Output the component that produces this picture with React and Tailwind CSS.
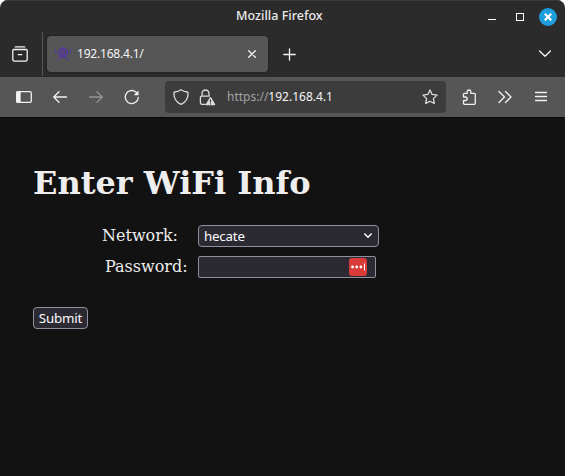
import React from 'react';

const ui = "font-['Noto_Sans','Open_Sans',sans-serif]";

function Icon({ children, className = '', size = 16 }) {
  return (
    <svg
      width={size}
      height={size}
      viewBox="0 0 16 16"
      fill="none"
      stroke="currentColor"
      strokeWidth="1.3"
      strokeLinecap="round"
      strokeLinejoin="round"
      className={`block shrink-0 ${className}`}
    >
      {children}
    </svg>
  );
}

function TitleBar() {
  return (
    <div className="flex h-8 shrink-0 items-center border-t border-[#393939] pr-2">
      <div className="w-[236px]" />
      <div className="w-[92px] pb-px text-[12.5px] leading-5 font-medium tracking-[0.02px] whitespace-nowrap text-[#ececec]">Mozilla Firefox</div>
      <div className="ml-auto flex items-center">
        <div className="mt-[5px] mr-[20px] h-px w-2 bg-white" />
        <div className="mr-[15px] h-2 w-2 border border-white" />
        <div className="flex h-[18px] w-[18px] items-center justify-center rounded-full bg-[#1f9ede] text-white">
          <svg width="8" height="8" viewBox="0 0 8 8" stroke="currentColor" strokeWidth="2.2">
            <path d="M.7.7l6.6 6.6M7.3.7L.7 7.3" />
          </svg>
        </div>
      </div>
    </div>
  );
}

function Favicon() {
  return (
    <svg width="16" height="16" viewBox="0 0 16 16" fill="#543d8d" className="block shrink-0">
      <path d="M5 2h2V1h2v1h2v1h1v1h1v5h-1v2h-1v1H5v-1H4V9H3V4h1V3h1z" />
      <path d="M0 3h1v4h2v1H1V7H0zM15 3h1v4h-1v1h-2V7h2zM4 11h1v2H4v1H2v-1h2zM11 11h1v2h2v1h-3z" />
      <path fill="#555" d="M5 5h1v3H5zM7 5h1v3H7zM10 5h1v3h-1z" opacity=".75" />
    </svg>
  );
}

function TabStrip() {
  return (
    <div className="flex h-[45px] shrink-0 text-[#f4f4f4]">
      <div className="flex h-11 w-[43px] items-center border-r border-[#555] pl-3">
        <Icon>
          <path d="M3.3.9h9.4M1.8 3.5h12.4a1 1 0 0 1 1 1v9a1.7 1.7 0 0 1-1.7 1.7h-11A1.7 1.7 0 0 1 .8 13.500v-9a1 1 0 0 1 1-1zM6.3 8.700h3.400" />
        </Icon>
      </div>
      <div className="mt-1 ml-1 flex h-9 w-[221px] items-center rounded bg-[#565656] pr-3 pl-2 shadow-[0_0_2px_rgba(0,0,0,0.6)]">
        <Favicon />
        <div className="ml-[6px] text-[12px] leading-5 tracking-[-0.2px] text-[#f4f4f4]">192.168.4.1/</div>
        <svg width="8" height="8" viewBox="0 0 8 8" stroke="currentColor" strokeWidth="1.3" strokeLinecap="round" className="mr-0 ml-auto">
          <path d="M.7.7l6.6 6.6M7.3.7L.7 7.3" />
        </svg>
      </div>
      <Icon className="mt-[15px] ml-[14px]">
        <path d="M7.500 1.800v11.400M1.800 7.500h11.400" />
      </Icon>
      <Icon className="mt-[14px] mr-3 ml-auto">
        <path d="M2.500 5L8 10.300 13.500 5" />
      </Icon>
    </div>
  );
}

function NavBar() {
  return (
    <div className="flex h-10 shrink-0 items-center bg-[#565656] text-[#f1f1f1]">
      <Icon className="ml-4">
        <rect x=".7" y="2.700" width="14.600" height="10.600" rx="1.300" />
        <path d="M1 3h3v10H1z" fill="currentColor" />
      </Icon>
      <Icon className="ml-5">
        <path d="M14.500 8H1.700M7 2.700L1.700 8 7 13.300" />
      </Icon>
      <Icon className="ml-5 text-[#929292]">
        <path d="M1.500 8h12.800M9 2.700L14.300 8 9 13.300" />
      </Icon>
      <Icon className="ml-5">
        <path d="M14.300 8.500A6.500 6.500 0 1 1 11.800 2.900L13.700 5" />
        <path d="M14.500 1.500v4.800H9.700z" fill="currentColor" stroke="none" />
      </Icon>
      <div className="ml-[25px] flex h-8 w-[281px] items-center rounded bg-[#3c3c3c] pr-2 pl-2 text-[#dedede]">
        <Icon>
          <path d="M8 .8c1.700 1.300 4 2 6.300 2.200.5 0 .8.400.8.900 0 5-2 9.200-7.100 11.400C2.900 13.100.9 8.900.9 3.900c0-.5.300-.9.800-.9C4 2.800 6.300 2.100 8 .8z" />
        </Icon>
        <svg width="17" height="17" viewBox="0 0 17 17" fill="none" stroke="currentColor" strokeWidth="1.3" strokeLinecap="round" strokeLinejoin="round" className="ml-[10px] block shrink-0">
          <path d="M3 7V4.500a3.500 3.500 0 0 1 7 0V7M6.300 15.300H3A1.600 1.600 0 0 1 1.400 13.700V8.700A1.600 1.600 0 0 1 3 7.100h7.300" />
          <path fill="currentColor" d="M11.500 8.700l4.100 7h-8.200z" />
          <path stroke="#3c3c3c" d="M11.500 11v2M11.500 14.800v.1" />
        </svg>
        <div className="ml-[11px] text-[12px] leading-5 whitespace-nowrap text-[#a2a2a2]">
          https://<span className="text-[#f4f4f4]">192.168.4.1</span>
        </div>
        <Icon className="ml-auto">
          <path d="M8 .9l2.100 4.500 4.900.7-3.600 3.500.9 4.900L8 12.200l-4.300 2.300.9-4.900L1 6.100l4.900-.7z" />
        </Icon>
      </div>
      <Icon className="ml-[15px]">
        <path d="M2.500 7V5.300a1 1 0 0 1 1-1H6.200V2.800a1.800 1.800 0 0 1 3.600 0v1.500h3.500a1 1 0 0 1 1 1v9a1 1 0 0 1-1 1H3.500a1 1 0 0 1-1-1V11.500h2a1.700 1.700 0 0 0 0-3.500h-2z" />
      </Icon>
      <Icon className="ml-[20px]">
        <path d="M2 2.500L7.500 8 2 13.500M8.500 2.500L14 8l-5.500 5.500" />
      </Icon>
      <Icon className="ml-5">
        <path d="M2.500 3.500h11M2.500 7.500h11M2.500 11.500h11" />
      </Icon>
    </div>
  );
}

function WifiForm() {
  return (
    <div className="flex-1 border-t border-[#090909] bg-[#121212] pl-[33px] font-['DejaVu_Serif',serif] text-[#eeeeee]">
      <h1 className="mt-[46px] text-[32px] leading-[38px] font-bold whitespace-nowrap">Enter WiFi Info</h1>
      <div className="mt-[23px] flex h-[22px] items-center">
        <label className="w-[165px] pl-[69px] text-[16px] leading-5">Network:</label>
        <div className={`flex h-[22px] w-[181px] items-center rounded border border-[#8f8f9d] bg-[#2b2a33] pr-[6px] pl-[5px] text-[13.333px] leading-5 text-[#fbfbfe] ${ui}`}>
          <span className="tracking-[-0.2px]">hecate</span>
          <svg width="8" height="6" viewBox="0 0 8 6" fill="none" stroke="currentColor" strokeWidth="1.5" strokeLinecap="round" strokeLinejoin="round" className="ml-auto">
            <path d="M.8 1L4 4.300 7.200 1" />
          </svg>
        </div>
      </div>
      <div className="mt-[9px] flex h-[22px] items-center">
        <label className="w-[165px] pl-[72px] text-[16px] leading-5 whitespace-nowrap">Password:</label>
        <div className="flex h-[22px] w-[178px] items-center rounded-[2px] border border-[#8f8f9d] bg-[#2b2a33] pr-2">
          <svg width="18" height="18" viewBox="0 0 18 18" className="ml-auto block">
            <rect width="18" height="18" rx="3" fill="#d83b38" />
            <g fill="#fff">
              <circle cx="3.500" cy="9" r="1.400" />
              <circle cx="7.700" cy="9" r="1.400" />
              <circle cx="11.900" cy="9" r="1.400" />
              <path d="M15 5.500h1v7h-1z" />
            </g>
          </svg>
        </div>
      </div>
      <button className={`mt-[29px] flex h-[22px] w-[55px] items-center justify-center rounded border border-[#8f8f9d] bg-[#2b2a33] text-[13.333px] leading-5 tracking-[-0.2px] text-[#fbfbfe] ${ui}`}>Submit</button>
    </div>
  );
}

export default function App() {
  return (
    <div className="h-[476px] w-[565px] overflow-hidden bg-white">
      <div className={`flex h-full flex-col overflow-hidden rounded-t-lg bg-[#2b2b2b] ${ui}`}>
        <TitleBar />
        <TabStrip />
        <NavBar />
        <WifiForm />
      </div>
    </div>
  );
}
